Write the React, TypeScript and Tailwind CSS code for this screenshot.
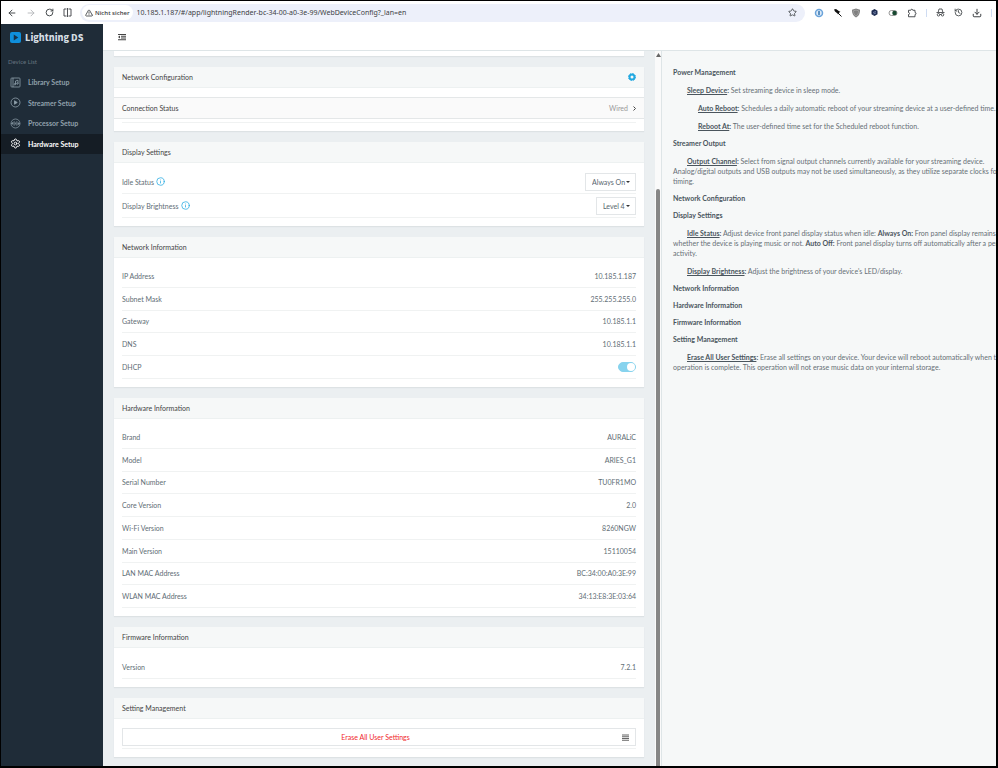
import type { ReactNode } from 'react';
import { ArrowLeft, ArrowRight, Download, History, Info, RotateCw, Settings, Star, TriangleAlert } from 'lucide-react';

const networkInfo = [
  ['IP Address', '10.185.1.187'],
  ['Subnet Mask', '255.255.255.0'],
  ['Gateway', '10.185.1.1'],
  ['DNS', '10.185.1.1'],
];

const hardwareInfo = [
  ['Brand', 'AURALiC'],
  ['Model', 'ARIES_G1'],
  ['Serial Number', 'TU0FR1MO'],
  ['Core Version', '2.0'],
  ['Wi-Fi Version', '8260NGW'],
  ['Main Version', '15110054'],
  ['LAN MAC Address', 'BC:34:00:A0:3E:99'],
  ['WLAN MAC Address', '34:13:E8:3E:03:64'],
];

function LibraryIcon() {
  return (
    <svg className="size-[11px]" viewBox="0 0 22 22" fill="none" stroke="currentColor" strokeWidth="1.6">
      <rect x="2" y="2" width="18" height="18" rx="1.5" />
      <path d="M6 2v18M11 14.5V8l5-1.5v6.5" />
      <circle cx="9.8" cy="14.5" r="1.5" />
      <circle cx="14.8" cy="13" r="1.5" />
    </svg>
  );
}

function StreamerIcon() {
  return (
    <svg className="size-[11px]" viewBox="0 0 22 22" fill="none" stroke="currentColor" strokeWidth="1.6">
      <circle cx="11" cy="11" r="9" />
      <path d="M9 7.5v7l5.5-3.5z" fill="currentColor" />
    </svg>
  );
}

function ProcessorIcon() {
  return (
    <svg className="size-[11px]" viewBox="0 0 22 22" fill="none" stroke="currentColor" strokeWidth="1.4">
      <circle cx="11" cy="11" r="9" />
      <path d="M2 11h3.5V8.5v5M8.3 6.5v9M11 9v4M13.7 6.5v9M16.5 8.5v5V11H20" />
    </svg>
  );
}

const navItems = [
  { name: 'Library Setup', icon: <LibraryIcon /> },
  { name: 'Streamer Setup', icon: <StreamerIcon /> },
  { name: 'Processor Setup', icon: <ProcessorIcon /> },
  { name: 'Hardware Setup', icon: <Settings className="size-[11px]" />, active: true },
];

function BrowserBar() {
  return (
    <header className="flex h-[23px] items-center bg-white pl-[6px] text-[#3c4043]">
      <div className="flex items-center gap-[9px]">
        <button aria-label="Back"><ArrowLeft className="size-[10px]" strokeWidth={2.2} /></button>
        <button aria-label="Forward"><ArrowRight className="size-[10px] text-[#b4b6b9]" strokeWidth={2.2} /></button>
        <button aria-label="Reload"><RotateCw className="size-[9px]" strokeWidth={2.5} /></button>
        <button aria-label="Split view">
          <svg className="size-[9px]" viewBox="0 0 18 18" fill="none" stroke="currentColor" strokeWidth="1.8">
            <path d="M7 2H2v14h5M11 2h5v14h-5M9 0v18" />
          </svg>
        </button>
      </div>
      <div className="ml-[8px] flex h-[18px] min-w-0 flex-1 items-center rounded-full bg-[#edf0fa] pl-[2px] pr-[8px]">
        <button className="flex h-[15px] shrink-0 items-center gap-[2px] rounded-full bg-white px-[3px] font-['Open_Sans',sans-serif] text-[6px] font-semibold">
          <TriangleAlert className="size-[8px]" strokeWidth={2.5} />
          Nicht sicher
        </button>
        <input
          aria-label="Address"
          defaultValue="10.185.1.187/#/app/lightningRender-bc-34-00-a0-3e-99/WebDeviceConfig?_lan=en"
          className="ml-[4px] min-w-0 flex-1 bg-transparent font-['Noto_Sans',sans-serif] text-[7px] outline-none"
        />
        <button aria-label="Bookmark"><Star className="size-[9px]" strokeWidth={2.2} /></button>
      </div>
      <div className="flex shrink-0 items-center gap-[9px] pl-[9px]">
        <button aria-label="Password manager">
          <svg className="size-[10px]" viewBox="0 0 20 20">
            <circle cx="10" cy="10" r="8.5" fill="#6aa3da" />
            <circle cx="10" cy="10" r="5.5" fill="#dceaf7" />
            <rect x="8.5" y="6" width="3" height="8" rx="1" fill="#3272ae" />
          </svg>
        </button>
        <button aria-label="Pin">
          <svg className="size-[9px]" viewBox="0 0 18 18" fill="#111">
            <path d="M2 3l4-1 7 5 2-1-5 7-1-2-5-4z" />
            <path d="M10 10l7 7" stroke="#111" strokeWidth="2" />
          </svg>
        </button>
        <button aria-label="Shield">
          <svg className="size-[10px]" viewBox="0 0 20 20">
            <path d="M10 1l8 2.5c0 7-1.5 12-8 15.5C3.5 15.5 2 10.5 2 3.5z" fill="#808080" />
            <path d="M10 4l5 1.5c0 5-1 8-5 10.5-4-2.5-5-5.5-5-10.5z" fill="none" stroke="#a8a8a8" strokeWidth="1.5" />
          </svg>
        </button>
        <button aria-label="Containers">
          <svg className="size-[9px]" viewBox="0 0 18 18">
            <path d="M9 2l6 3.5v7L9 16l-6-3.5v-7z" fill="#1d2b50" />
            <path d="M6 9l6-2M7 12l5-2" stroke="#8797bd" strokeWidth="1.5" />
          </svg>
        </button>
        <button aria-label="Dark mode">
          <svg className="size-[10px]" viewBox="0 0 20 20">
            <rect x="2" y="5" width="16" height="10" rx="5" fill="#fff" stroke="#777" strokeWidth="1.5" />
            <circle cx="13" cy="10" r="4.5" fill="#16472f" />
          </svg>
        </button>
        <button aria-label="Extensions">
          <svg className="size-[10px]" viewBox="0 0 20 20" fill="none" stroke="currentColor" strokeWidth="1.8">
            <path d="M3 4.5h4.5a2 2 0 0 1 4 0H16V9a2 2 0 0 1 0 4v4.5H3V13a2 2 0 0 0 0-4z" />
          </svg>
        </button>
        <span className="h-[8px] w-px bg-[#cfdcf2]" />
        <button aria-label="Private window">
          <svg className="size-[9px]" viewBox="0 0 18 18" fill="none" stroke="currentColor" strokeWidth="1.7">
            <path d="M1 9h16M4.5 8L6 2h6l1.5 6" />
            <circle cx="5" cy="13.5" r="2.5" />
            <circle cx="13" cy="13.5" r="2.5" />
            <path d="M7.5 13h3" />
          </svg>
        </button>
        <button aria-label="History"><History className="size-[9px]" strokeWidth={2.2} /></button>
        <button aria-label="Downloads"><Download className="size-[10px]" strokeWidth={2.4} /></button>
        <span className="mr-[4px] h-[8px] w-px bg-[#cfdcf2]" />
      </div>
    </header>
  );
}

function Sidebar() {
  return (
    <aside className="w-[102px] shrink-0 bg-[#1f2c38] font-bold text-[#91a1ac]">
      <div className="flex h-[27px] items-center gap-[4px] pl-[9px] text-[#d5dde3]">
        <svg className="size-[11px]" viewBox="0 0 22 22">
          <rect width="22" height="22" rx="4" fill="#0f8fdc" />
          <path d="M7.5 5v12l9-6z" fill="#16324a" />
        </svg>
        <span className="font-['Noto_Sans_CJK_SC',sans-serif] text-[9px] font-black">Lightning DS</span>
      </div>
      <p className="mt-[6px] mb-[5px] pl-[7px] text-[6px] leading-[10px] font-normal text-[#66747f]">Device List</p>
      <nav className="grid min-h-[82px] auto-rows-fr">
        {navItems.map((item) => (
          <a
            key={item.name}
            href="#"
            className={`flex items-center gap-[7px] pl-[9px] ${item.active ? 'bg-[#151d25] text-white' : ''}`}
          >
            {item.icon}
            {item.name}
          </a>
        ))}
      </nav>
    </aside>
  );
}

function Card({ title, action, children }: { title: string; action?: ReactNode; children: ReactNode }) {
  return (
    <section className="bg-white shadow-[0_1px_1px_#dde2e4]">
      <div className="flex h-[21px] items-center justify-between border-b border-[#edf1f1] bg-[#f6f8f8] px-[8px] text-[#444]">
        <h2>{title}</h2>
        {action}
      </div>
      {children}
    </section>
  );
}

function InfoRow({ label, children }: { label: ReactNode; children: ReactNode }) {
  return (
    <div className="flex items-center justify-between border-b border-[#f0f2f2]">
      <dt>{label}</dt>
      <dd>{children}</dd>
    </div>
  );
}

function SettingSelect({ id, label, options, size }: { id: string; label: string; options: string[]; size: string }) {
  return (
    <div className="flex h-[24px] items-center justify-between border-b border-[#f0f2f2]">
      <label htmlFor={id} className="flex items-center gap-[2px]">
        {label}
        <Info className="size-[9px] text-[#23a9e1]" />
      </label>
      <div className="relative">
        <select
          id={id}
          className={`h-[18px] appearance-none border border-[#e3e6e8] bg-white pl-[6px] text-[#58666e] ${size}`}
        >
          {options.map((option) => (
            <option key={option}>{option}</option>
          ))}
        </select>
        <svg className="pointer-events-none absolute top-[8px] right-[6px] h-[2px] w-[4px]" viewBox="0 0 8 4">
          <path d="M0 0h8L4 4z" fill="#333" />
        </svg>
      </div>
    </div>
  );
}

function HelpHeading({ children }: { children: ReactNode }) {
  return <h3 className="mt-[7px] font-bold text-[#4a555d]">{children}</h3>;
}

function HelpEntry({ name, nested, children }: { name: string; nested?: boolean; children: ReactNode }) {
  return (
    <p className={`mt-[8px] ${nested ? 'indent-[25px]' : 'indent-[14px]'}`}>
      <strong className="underline">{name}</strong>
      <strong>:</strong> {children}
    </p>
  );
}

function HelpPanel() {
  return (
    <article className="w-[335px] shrink-0 overflow-hidden border-l border-[#dee5e7] bg-[#f6f8f8] pt-[9px] pl-[11px] whitespace-nowrap text-[#666f76] [&_strong]:text-[#4a555d]">
      <HelpHeading>Power Management</HelpHeading>
      <HelpEntry name="Sleep Device">Set streaming device in sleep mode.</HelpEntry>
      <HelpEntry name="Auto Reboot" nested>
        Schedules a daily automatic reboot of your streaming device at a user-defined time.
      </HelpEntry>
      <HelpEntry name="Reboot At" nested>The user-defined time set for the Scheduled reboot function.</HelpEntry>
      <HelpHeading>Streamer Output</HelpHeading>
      <HelpEntry name="Output Channel">
        Select from signal output channels currently available for your streaming device.
        <br />
        Analog/digital outputs and USB outputs may not be used simultaneously, as they utilize separate clocks for signal
        <br />
        timing.
      </HelpEntry>
      <HelpHeading>Network Configuration</HelpHeading>
      <HelpHeading>Display Settings</HelpHeading>
      <HelpEntry name="Idle Status">
        Adjust device front panel display status when idle: <strong>Always On:</strong> Fron panel display remains on
        <br />
        whether the device is playing music or not. <strong>Auto Off:</strong> Front panel display turns off automatically after a period of no
        <br />
        activity.
      </HelpEntry>
      <HelpEntry name="Display Brightness">Adjust the brightness of your device's LED/display.</HelpEntry>
      <HelpHeading>Network Information</HelpHeading>
      <HelpHeading>Hardware Information</HelpHeading>
      <HelpHeading>Firmware Information</HelpHeading>
      <HelpHeading>Setting Management</HelpHeading>
      <HelpEntry name="Erase All User Settings">
        Erase all settings on your device. Your device will reboot automatically when the
        <br />
        operation is complete. This operation will not erase music data on your internal storage.
      </HelpEntry>
    </article>
  );
}

export default function App() {
  return (
    <div className="flex min-h-screen flex-col border border-r-2 border-b-2 border-black bg-white font-['Lato',sans-serif] text-[7px] leading-[10px] text-[#616d75]">
      <BrowserBar />
      <div className="flex flex-1">
        <Sidebar />
        <div className="flex min-w-0 flex-1 flex-col">
          <div className="flex h-[27px] items-center border-b border-[#dee5e7] bg-white pl-[15px]">
            <button aria-label="Collapse menu">
              <svg className="size-[8px]" viewBox="0 0 16 16" fill="#444">
                <path d="M0 2h16v2H0zM6 5.5h10v2H6zM6 9h10v2H6zM0 12.5h16v2H0zM4 5v6L0 8z" />
              </svg>
            </button>
          </div>
          <div className="flex flex-1">
            <main className="flex min-w-0 flex-1 flex-col gap-[11px] bg-[#ebeff1] px-[11px] pb-[9px]">
              <div className="h-[5px] bg-white shadow-[0_1px_1px_#dde2e4]" />

              <Card
                title="Network Configuration"
                action={
                  <button aria-label="Configure network">
                    <svg className="size-[8px]" viewBox="0 0 16 16" fill="none" stroke="#23a9e1">
                      <circle cx="8" cy="8" r="5" strokeWidth="4" />
                      <circle cx="8" cy="8" r="7" strokeWidth="2" strokeDasharray="2.75" />
                    </svg>
                  </button>
                }
              >
                <div className="pt-[9px] pb-[8px]">
                  <a href="#" className="flex h-[22px] items-center justify-between border-y border-[#e4e7e8] bg-[#fafafa] px-[8px] text-[#444]">
                    Connection Status
                    <span className="flex items-center gap-[5px] text-[#999]">
                      Wired
                      <svg className="h-[5px] w-[3px]" viewBox="0 0 6 10" fill="none" stroke="#444" strokeWidth="2">
                        <path d="M1 1l4 4-4 4" />
                      </svg>
                    </span>
                  </a>
                  <div className="mx-[8px] h-[4px] border-b border-[#f0f2f2]" />
                </div>
              </Card>

              <Card title="Display Settings">
                <div className="px-[8px] pt-[7px] pb-[8px]">
                  <SettingSelect id="idle-status" label="Idle Status" options={['Always On', 'Auto Off']} size="w-[51px]" />
                  <SettingSelect id="brightness" label="Display Brightness" options={['Level 4', 'Level 3', 'Level 2', 'Level 1']} size="w-[40px]" />
                </div>
              </Card>

              <Card title="Network Information">
                <dl className="mx-[8px] mt-[7px] mb-[8px] grid min-h-[114px] auto-rows-fr">
                  {networkInfo.map(([label, value]) => (
                    <InfoRow key={label} label={label}>{value}</InfoRow>
                  ))}
                  <InfoRow label={<label htmlFor="dhcp">DHCP</label>}>
                    <input
                      id="dhcp"
                      type="checkbox"
                      defaultChecked
                      className="flex h-[10px] w-[18px] appearance-none justify-end rounded-full border border-[#87d3ee] bg-[#87d3ee] before:size-[8px] before:rounded-full before:bg-white"
                    />
                  </InfoRow>
                </dl>
              </Card>

              <Card title="Hardware Information">
                <dl className="mx-[8px] mt-[7px] mb-[8px] grid min-h-[182px] auto-rows-fr">
                  {hardwareInfo.map(([label, value]) => (
                    <InfoRow key={label} label={label}>{value}</InfoRow>
                  ))}
                </dl>
              </Card>

              <Card title="Firmware Information">
                <dl className="mx-[8px] mt-[7px] mb-[8px] grid min-h-[24px]">
                  <InfoRow label="Version">7.2.1</InfoRow>
                </dl>
              </Card>

              <Card title="Setting Management">
                <div className="px-[8px] pt-[9px] pb-[8px]">
                  <button className="flex h-[18px] w-full items-center border border-[#e3e6e8] px-[6px] text-[#f0282d]">
                    <span className="flex-1">Erase All User Settings</span>
                    <svg className="size-[7px]" viewBox="0 0 14 14" fill="#666">
                      <path d="M0 1h14v2H0zM0 4.5h14v2H0zM0 8h14v2H0zM0 11.5h14v2H0z" />
                    </svg>
                  </button>
                  <div className="h-[3px] border-b border-[#f0f2f2]" />
                </div>
              </Card>
            </main>

            <div className="flex w-[6px] shrink-0 flex-col items-center bg-[#fafafa] pt-[2px]">
              <svg className="h-[4px] w-[5px] shrink-0" viewBox="0 0 10 8">
                <path d="M5 0l5 8H0z" fill="#666" />
              </svg>
              <div className="mt-[132px] w-[4px] flex-1 rounded-t-full bg-[#868686]" />
            </div>

            <HelpPanel />
          </div>
        </div>
      </div>
    </div>
  );
}
